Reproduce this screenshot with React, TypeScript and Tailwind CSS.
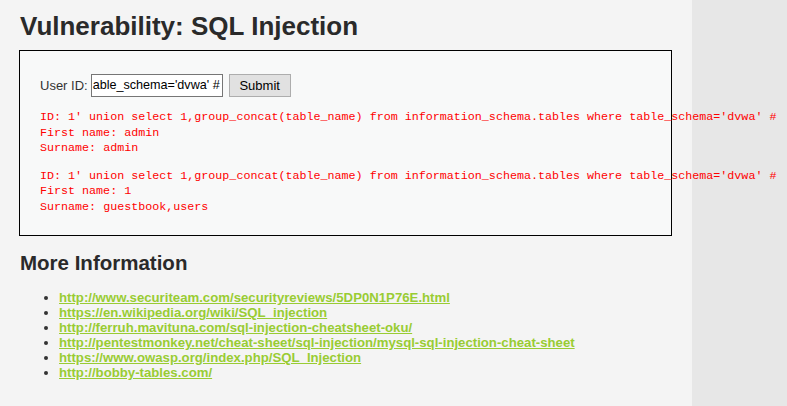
const links = [
  'http://www.securiteam.com/securityreviews/5DP0N1P76E.html',
  'https://en.wikipedia.org/wiki/SQL_injection',
  'http://ferruh.mavituna.com/sql-injection-cheatsheet-oku/',
  'http://pentestmonkey.net/cheat-sheet/sql-injection/mysql-sql-injection-cheat-sheet',
  'https://www.owasp.org/index.php/SQL_Injection',
  'http://bobby-tables.com/',
];

const query =
  "ID: 1' union select 1,group_concat(table_name) from information_schema.tables where table_schema='dvwa' #";

const results = [
  { first: 'admin', surname: 'admin' },
  { first: '1', surname: 'guestbook,users' },
];

export default function App() {
  return (
    <div className="flex min-h-[406px] w-[787px] overflow-hidden font-['Liberation_Sans',Arial,sans-serif] text-[#222]">
      <div className="w-[692px] shrink-0 bg-[#f4f4f4] px-[19px] pt-[10px]">
        <h1 className="text-[26px] font-bold leading-[32px] text-[#2a2a2a] pl-px">
          Vulnerability: SQL Injection
        </h1>

        <div className="mt-[8px] h-[186px] w-[653px] border border-black bg-[#f8f9f9] pl-[20px] pt-[23px]">
          <form className="flex items-center text-[13px]" onSubmit={(e) => e.preventDefault()}>
            <label className="mr-[3px] text-[#333]">User ID:</label>
            {/* input scrolled to the end of a long value */}
            <div className="flex h-[23px] w-[132px] items-center justify-end overflow-hidden whitespace-nowrap border border-[#767676] bg-white pr-[2px] text-[12.6px] text-black">
              able_schema='dvwa' #
            </div>
            <button
              type="submit"
              className="ml-[6px] h-[23px] w-[62px] border border-[#adadad] bg-[#e1e1e1] text-[13px] text-black"
            >
              Submit
            </button>
          </form>

          <div className="relative mt-[13px] whitespace-pre font-['Liberation_Mono','Courier_New',monospace] text-[11.7px] leading-[15.5px] text-[#ff0000]">
            {results.map((r, i) => (
              <div key={i} className={i > 0 ? 'mt-[12px]' : ''}>
                <div>{query}</div>
                <div>First name: {r.first}</div>
                <div>Surname: {r.surname}</div>
              </div>
            ))}
          </div>
        </div>

        <h2 className="mt-[15px] text-[20.5px] font-bold leading-[24px] text-[#2a2a2a] pl-px">
          More Information
        </h2>
        <ul className="mt-[15px] list-disc pl-[40px] text-[13.2px] font-bold leading-[15px]">
          {links.map((href) => (
            <li key={href} className="marker:text-[#333]">
              <a href={href} className="text-[#99cc33] underline">
                {href}
              </a>
            </li>
          ))}
        </ul>
      </div>
      <div className="flex-1 bg-[#e7e7e7]" />
    </div>
  );
}
